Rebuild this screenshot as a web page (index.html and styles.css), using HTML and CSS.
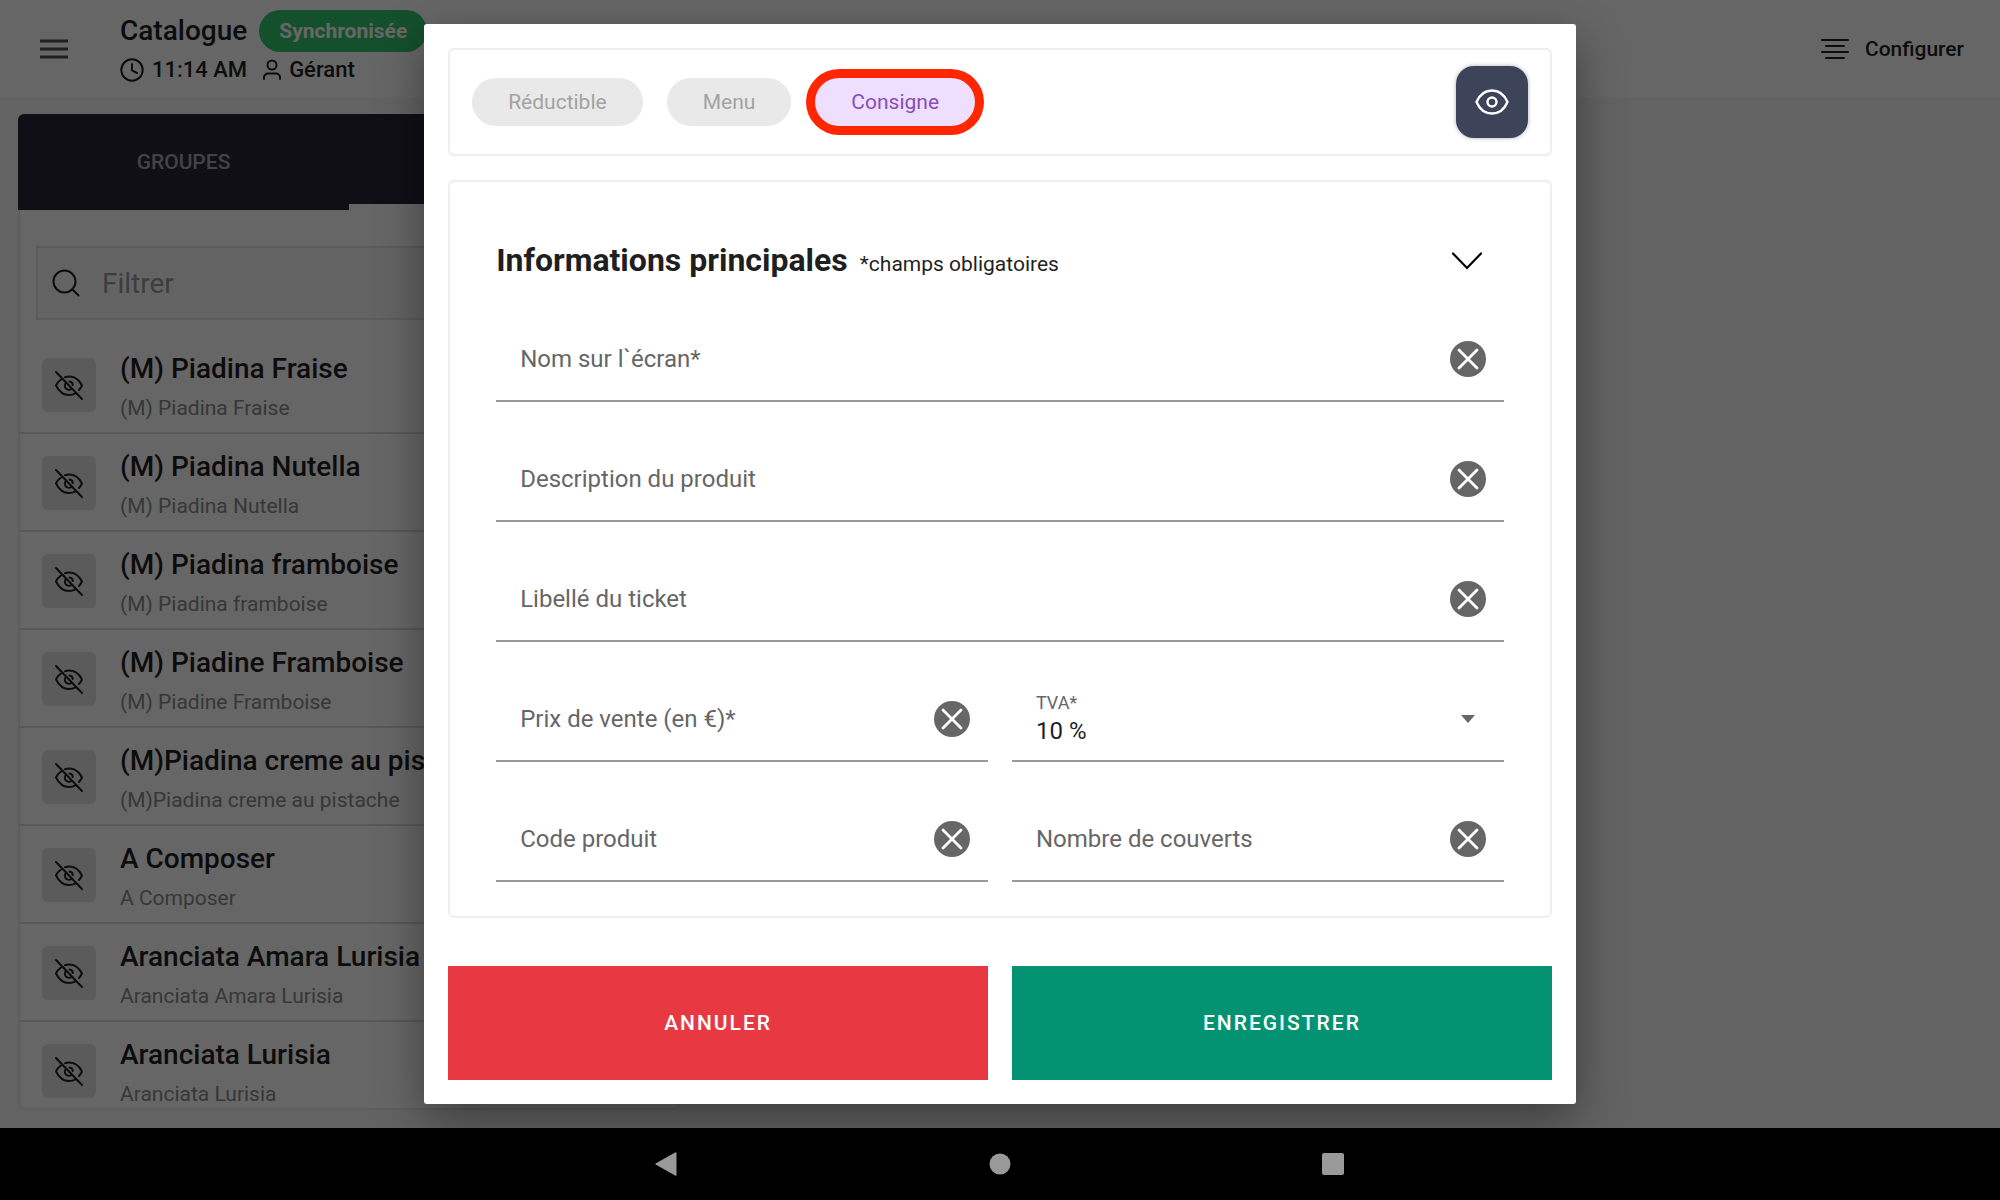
FILE: index.html
```html
<!DOCTYPE html>
<html lang="fr">
<head>
<meta charset="utf-8">
<meta name="viewport" content="width=device-width, initial-scale=1">
<title>Catalogue</title>
<link rel="stylesheet" href="styles.css">
</head>
<body>
<svg class="sprite" aria-hidden="true">
  <symbol id="i-hidden" viewBox="0 0 32 32"><g fill="none" stroke="currentColor" stroke-width="2" stroke-linecap="round" stroke-linejoin="round"><path d="M3 3l26 27"/><path d="M12 8.200a13 13 0 0 1 4-.7c6 0 10.500 4 13 9a18 18 0 0 1-3 4.500"/><path d="M8 10.500c-2.200 1.500-3.900 3.600-5 6 2.500 5 7 9.500 13 9.500 2.400 0 4.500-.6 6.500-1.700"/><path d="M13 14a4 4 0 0 0 5.500 5.800"/><path d="M16.500 12.600a4 4 0 0 1 3.300 3.400"/></g></symbol>
  <symbol id="i-clear" viewBox="0 0 36 36"><circle cx="18" cy="18" r="18" fill="#666"/><path d="M9 9l18 18M27 9L9 27" stroke="#fff" stroke-width="2.800" stroke-linecap="round"/></symbol>
</svg>
<div class="app">
  <header class="topbar">
    <button class="icon-button" aria-label="Menu principal"><svg width="28" height="20" viewBox="0 0 28 20"><path d="M0 2h28M0 10h28M0 18h28" stroke="#505050" stroke-width="3"/></svg></button>
    <div class="heading">
      <div class="heading-row"><h1>Catalogue</h1><span class="sync">Synchronisée</span></div>
      <div class="status">
        <svg width="24" height="24" viewBox="0 0 24 24" fill="none" stroke="currentColor" stroke-width="2" stroke-linecap="round"><circle cx="12" cy="12" r="10.700"/><path d="M12 6v6.500l5 2.500"/></svg>
        <span>11:14 AM</span>
        <svg class="person" width="18" height="22" viewBox="0 0 18 22" fill="none" stroke="currentColor" stroke-width="2" stroke-linecap="round"><circle cx="9" cy="6" r="4.500"/><path d="M1 20v-1.500a4 4 0 0 1 4-4h8a4 4 0 0 1 4 4V20"/></svg>
        <span>Gérant</span>
      </div>
    </div>
    <button class="configure"><svg width="28" height="22" viewBox="0 0 28 22" stroke="currentColor" stroke-width="2" stroke-linecap="round"><path d="M1 2h26M5 8h18M1 14h26M5 20h18"/></svg>Configurer</button>
  </header>
  <main class="catalog">
    <nav class="tabs"><button class="tab">GROUPES</button><button class="tab tab-active">PRODUITS</button></nav>
    <div class="panel">
      <label class="search"><svg width="28" height="28" viewBox="0 0 28 28" fill="none" stroke="currentColor" stroke-width="2" stroke-linecap="round"><circle cx="12.500" cy="12.500" r="11"/><path d="M20.500 20.500l6 6"/></svg><input type="text" placeholder="Filtrer" aria-label="Filtrer"></label>
      <ul class="products">
        <li><button class="visibility" aria-label="Afficher"><svg><use href="#i-hidden"/></svg></button><div><h2>(M) Piadina Fraise</h2><p>(M) Piadina Fraise</p></div></li>
        <li><button class="visibility" aria-label="Afficher"><svg><use href="#i-hidden"/></svg></button><div><h2>(M) Piadina Nutella</h2><p>(M) Piadina Nutella</p></div></li>
        <li><button class="visibility" aria-label="Afficher"><svg><use href="#i-hidden"/></svg></button><div><h2>(M) Piadina framboise</h2><p>(M) Piadina framboise</p></div></li>
        <li><button class="visibility" aria-label="Afficher"><svg><use href="#i-hidden"/></svg></button><div><h2>(M) Piadine Framboise</h2><p>(M) Piadine Framboise</p></div></li>
        <li><button class="visibility" aria-label="Afficher"><svg><use href="#i-hidden"/></svg></button><div><h2>(M)Piadina creme au pistache</h2><p>(M)Piadina creme au pistache</p></div></li>
        <li><button class="visibility" aria-label="Afficher"><svg><use href="#i-hidden"/></svg></button><div><h2>A Composer</h2><p>A Composer</p></div></li>
        <li><button class="visibility" aria-label="Afficher"><svg><use href="#i-hidden"/></svg></button><div><h2>Aranciata Amara Lurisia</h2><p>Aranciata Amara Lurisia</p></div></li>
        <li><button class="visibility" aria-label="Afficher"><svg><use href="#i-hidden"/></svg></button><div><h2>Aranciata Lurisia</h2><p>Aranciata Lurisia</p></div></li>
      </ul>
    </div>
  </main>
  <div class="overlay">
    <form class="dialog" role="dialog" aria-label="Produit">
      <div class="dialog-body">
        <section class="card chips">
          <button type="button" class="chip">Réductible</button>
          <button type="button" class="chip">Menu</button>
          <button type="button" class="chip chip-on">Consigne</button>
          <button type="button" class="preview" aria-label="Visible"><svg width="34" height="26" viewBox="0 0 34 26" fill="none" stroke="#fff" stroke-width="2.400"><path d="M1.500 13C4.500 6 10 1.500 17 1.500S29.500 6 32.500 13C29.500 20 24 24.500 17 24.500S4.500 20 1.500 13z" stroke-linejoin="round"/><circle cx="17" cy="13" r="4.500"/></svg></button>
        </section>
        <section class="card details">
          <div class="details-head">
            <h2>Informations principales</h2><span>*champs obligatoires</span>
            <button type="button" class="collapse" aria-label="Réduire"><svg width="32" height="18" viewBox="0 0 32 18" fill="none" stroke="#000" stroke-width="2.200" stroke-linecap="round"><path d="M2 1.500l14 14.500L30 1.500"/></svg></button>
          </div>
          <div class="fields">
            <div class="field wide"><input type="text" placeholder="Nom sur l`écran*" aria-label="Nom sur l`écran"><button type="button" aria-label="Effacer"><svg><use href="#i-clear"/></svg></button></div>
            <div class="field wide"><input type="text" placeholder="Description du produit" aria-label="Description du produit"><button type="button" aria-label="Effacer"><svg><use href="#i-clear"/></svg></button></div>
            <div class="field wide"><input type="text" placeholder="Libellé du ticket" aria-label="Libellé du ticket"><button type="button" aria-label="Effacer"><svg><use href="#i-clear"/></svg></button></div>
            <div class="field"><input type="text" placeholder="Prix de vente (en €)*" aria-label="Prix de vente (en €)"><button type="button" aria-label="Effacer"><svg><use href="#i-clear"/></svg></button></div>
            <div class="field choice"><div class="choice-text"><label for="tva">TVA*</label><select id="tva"><option>10 %</option></select></div><svg class="arrow" viewBox="0 0 14 8"><path d="M0 0h14L7 8z" fill="#666"/></svg></div>
            <div class="field"><input type="text" placeholder="Code produit" aria-label="Code produit"><button type="button" aria-label="Effacer"><svg><use href="#i-clear"/></svg></button></div>
            <div class="field"><input type="text" placeholder="Nombre de couverts" aria-label="Nombre de couverts"><button type="button" aria-label="Effacer"><svg><use href="#i-clear"/></svg></button></div>
          </div>
        </section>
      </div>
      <div class="actions"><button type="button" class="cancel">ANNULER</button><button type="submit" class="save">ENREGISTRER</button></div>
    </form>
  </div>
  <nav class="system" aria-label="Navigation système">
    <button aria-label="Retour"><svg width="24" height="24" viewBox="0 0 24 24"><path d="M21.500 1v22a1 1 0 0 1-1.500.6L1.500 13a1 1 0 0 1 0-2L20 .4a1 1 0 0 1 1.500.6z" fill="#999"/></svg></button>
    <button aria-label="Accueil"><svg width="24" height="24" viewBox="0 0 24 24"><circle cx="12" cy="12" r="10.500" fill="#999"/></svg></button>
    <button aria-label="Applications récentes"><svg width="24" height="24" viewBox="0 0 24 24"><rect x="1" y="1" width="22" height="22" rx="2" fill="#999"/></svg></button>
  </nav>
</div>
</body>
</html>
```
FILE: styles.css
```css
* { box-sizing: border-box; }
body { margin: 0; background: #f8f8f8; color: #1f1f1f; font-family: Roboto, "Liberation Sans", sans-serif; }
h1, h2, p, ul { margin: 0; padding: 0; }
button, input, select { font: inherit; color: inherit; margin: 0; padding: 0; border: 0; background: none; }
button { cursor: pointer; }
svg { display: block; flex: none; }
.sprite { position: absolute; width: 0; height: 0; }

.app { position: relative; display: flex; flex-direction: column; height: 100vh; overflow: hidden; }

.topbar { display: flex; align-items: center; height: 97px; flex: none; padding: 0 36px 0 40px; background: #fff; }
.icon-button { width: 28px; margin-right: 52px; }
.heading { display: flex; flex-direction: column; gap: 4px; margin-bottom: 4px; }
.heading-row { display: flex; align-items: center; gap: 12px; }
h1 { font-size: 28px; font-weight: 500; line-height: 32px; }
.sync { padding: 0 20px; border-radius: 21px; background: #34c76f; color: #fff; font-size: 21px; font-weight: 700; line-height: 42px; }
.status { display: flex; align-items: center; gap: 8px; font-size: 22px; font-weight: 500; line-height: 28px; }
.status .person { margin-left: 8px; }
.configure { display: flex; align-items: center; gap: 16px; margin-left: auto; font-size: 21px; font-weight: 500; }

.catalog { display: flex; flex-direction: column; flex: 1; min-height: 0; width: 34%; margin: 17px 0 18px; padding-left: 18px; }
.tabs { display: flex; flex: none; height: 96px; background: #282637; border-radius: 6px 6px 0 0; }
.tab { flex: 1; font-size: 21px; font-weight: 500; color: #a8a8b0; }
.tab-active { border-bottom: 6px solid #fff; color: #fff; }
.panel { display: flex; flex-direction: column; flex: 1; min-height: 0; overflow: hidden; border: 2px solid #e9e9e9; border-top: 0; border-radius: 0 0 8px 8px; background: #fff; }
.search { display: flex; align-items: center; gap: 20px; flex: none; height: 74px; margin: 36px 16px 16px; padding: 0 14px; border: 2px solid #e4e4e4; background: #f8f8f8; }
.search input { flex: 1; min-width: 0; padding-left: 2px; font-size: 28px; }
.search input::placeholder { color: #999; opacity: 1; }
.products { list-style: none; }
.products li { display: flex; gap: 24px; height: 98px; padding: 18px 22px 0; border-bottom: 2px solid #dcdcdc; }
.visibility { display: grid; place-items: center; width: 54px; height: 54px; margin-top: 4px; border-radius: 6px; background: #e3e3e3; }
.visibility svg { width: 32px; height: 32px; }
.products h2 { font-size: 28px; font-weight: 500; line-height: 30px; white-space: nowrap; }
.products p { margin-top: 12px; font-size: 21px; line-height: 24px; color: #8a8a8a; white-space: nowrap; }

.overlay { position: absolute; inset: 0 0 72px; display: flex; justify-content: center; padding: 24px; background: rgba(0, 0, 0, .6); overflow: hidden; }
.dialog { display: flex; flex-direction: column; gap: 48px; width: 59%; padding: 24px; border-radius: 3px; background: #fff; box-shadow: 0 16px 48px rgba(0, 0, 0, .4); }
.dialog-body { display: flex; flex-direction: column; gap: 24px; flex: 1; min-height: 0; overflow: hidden; }
.card { flex: none; border: 2px solid #eee; border-radius: 6px; }
.chips { display: flex; align-items: center; gap: 24px; height: 108px; padding: 0 22px; }
.chip { height: 48px; padding: 0 36px; border-radius: 24px; background: #e9e9e9; color: #a3a3a3; font-size: 21px; }
.chip-on { background: #eedfff; color: #8a4cb8; box-shadow: 0 0 0 9px #ff2600; }
.preview { display: grid; place-items: center; width: 72px; height: 72px; margin-left: auto; border-radius: 18px; background: #3d4358; box-shadow: 0 0 4px #aab; }
.details { padding: 34px 46px; }
.details-head { display: flex; align-items: baseline; gap: 12px; height: 86px; padding-top: 24px; }
.details-head h2 { font-size: 32px; font-weight: 700; line-height: 40px; }
.details-head span { font-size: 21px; }
.collapse { margin: 0 21px 0 auto; align-self: flex-start; padding-top: 12px; }
.fields { display: grid; grid-template-columns: 1fr 1fr; gap: 36px 24px; margin-top: 16px; }
.field { display: flex; align-items: center; height: 84px; padding: 0 18px 0 24px; border-bottom: 2px solid #999; }
.wide { grid-column: 1 / -1; }
.field input { flex: 1; min-width: 0; font-size: 24px; }
.field input::placeholder { color: #666; opacity: 1; }
.field button svg { width: 36px; height: 36px; }
.choice-text { display: flex; flex-direction: column; flex: 1; }
.choice label { font-size: 18px; line-height: 24px; color: #666; }
.choice select { appearance: none; font-size: 24px; line-height: 32px; }
.arrow { width: 14px; height: 8px; margin-right: 11px; }
.actions { display: grid; grid-template-columns: 1fr 1fr; gap: 24px; flex: none; height: 114px; }
.actions button { color: #fff; font-size: 21px; font-weight: 500; letter-spacing: 2px; }
.cancel { background: #e83942; }
.save { background: #039373; }

.system { display: flex; justify-content: center; flex: none; height: 72px; background: #000; }
.system button { display: grid; place-items: center; width: 333px; }
```
